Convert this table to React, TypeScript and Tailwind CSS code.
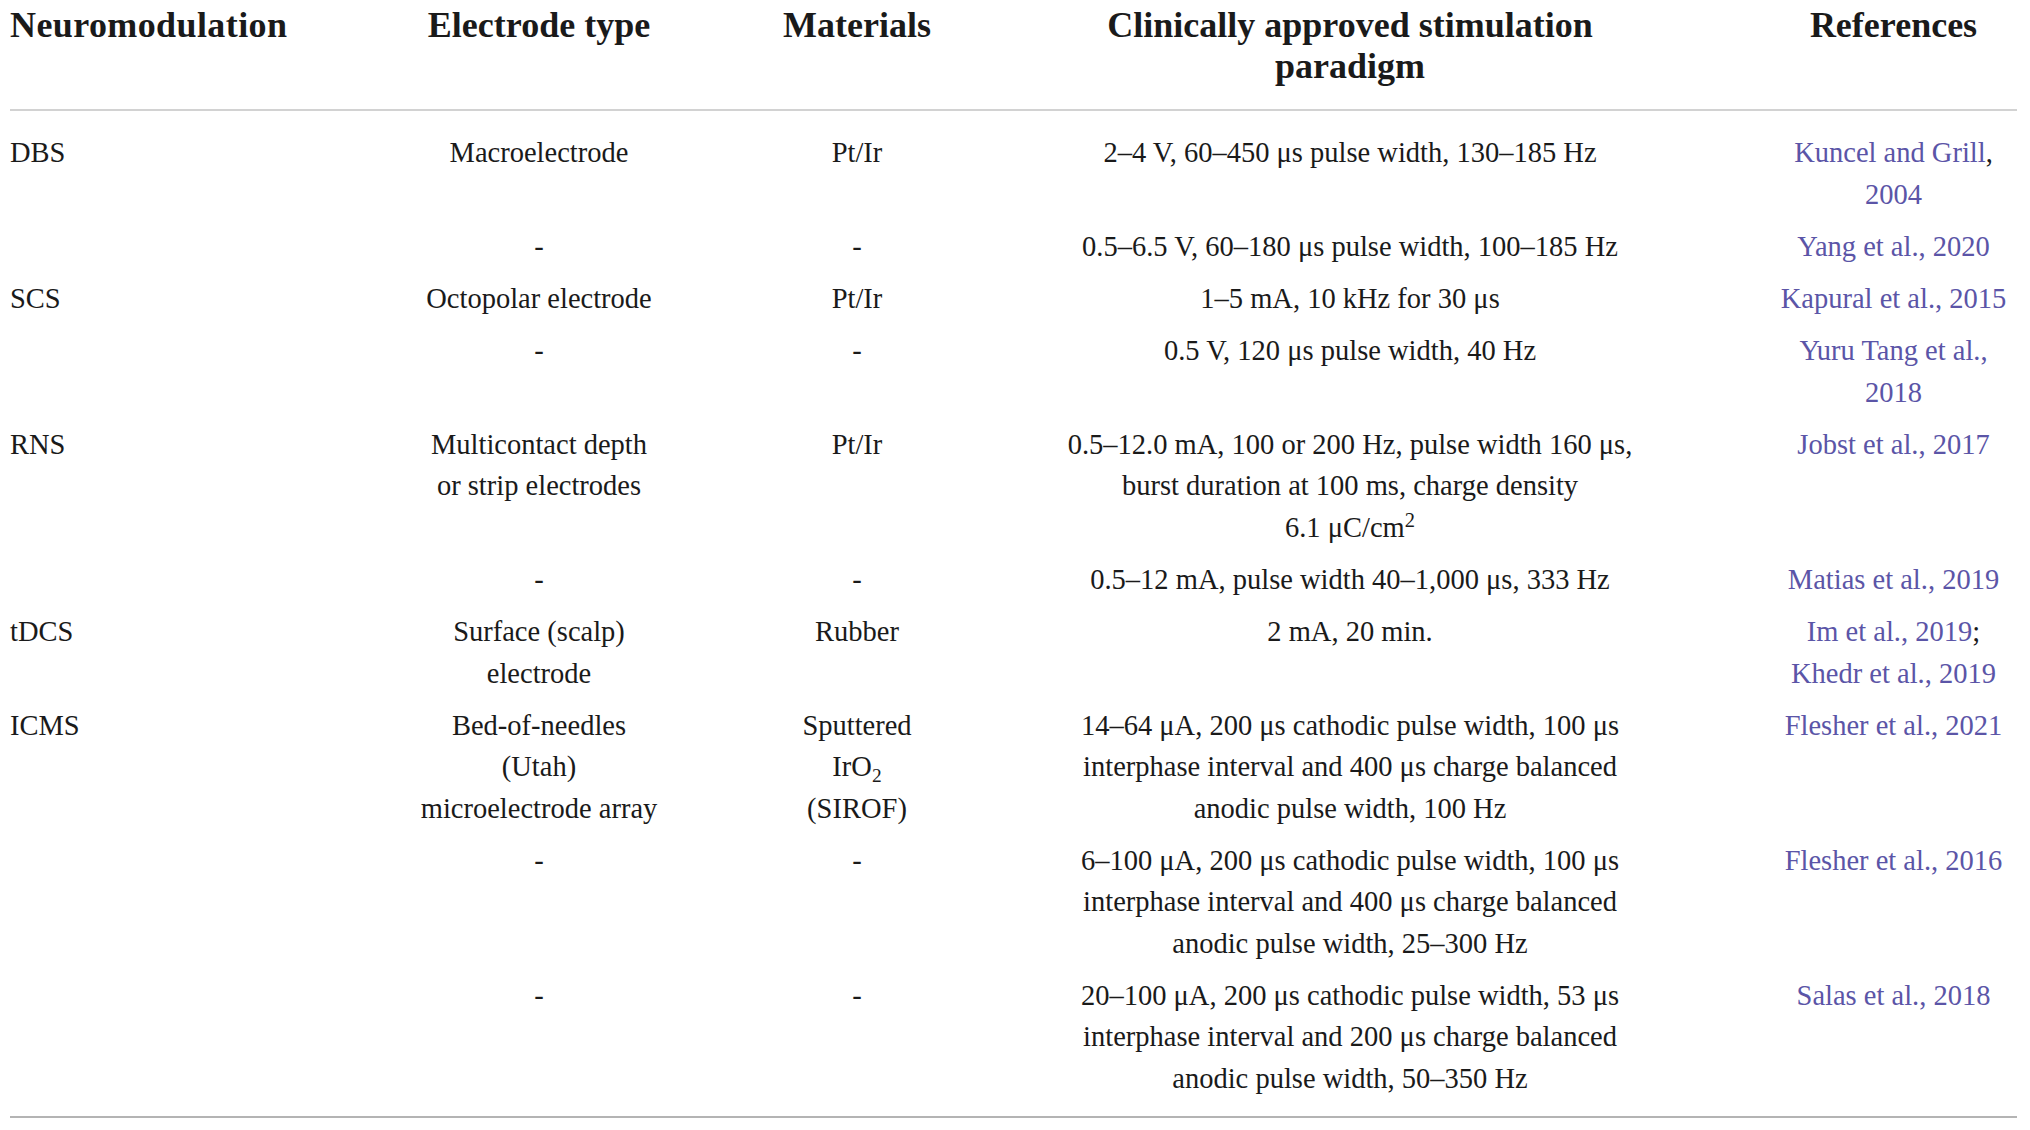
import React from 'react';

/* ------------------------------------------------------------------ */
/* Data                                                                */
/* ------------------------------------------------------------------ */

type Lines = React.ReactNode[];

interface Row {
  mod: string;
  electrode: Lines;
  material: Lines;
  paradigm: Lines;
  refs: Lines;
}

const Ref = ({ children }: { children: React.ReactNode }) => (
  <span className="text-[#5b55a7]">{children}</span>
);

const ROWS: Row[] = [
  {
    mod: 'DBS',
    electrode: ['Macroelectrode'],
    material: ['Pt/Ir'],
    paradigm: ['2–4 V, 60–450 μs pulse width, 130–185 Hz'],
    refs: [<><Ref>Kuncel and Grill</Ref>,</>, <Ref>2004</Ref>],
  },
  {
    mod: '',
    electrode: ['-'],
    material: ['-'],
    paradigm: ['0.5–6.5 V, 60–180 μs pulse width, 100–185 Hz'],
    refs: [<Ref>Yang et al., 2020</Ref>],
  },
  {
    mod: 'SCS',
    electrode: ['Octopolar electrode'],
    material: ['Pt/Ir'],
    paradigm: ['1–5 mA, 10 kHz for 30 μs'],
    refs: [<Ref>Kapural et al., 2015</Ref>],
  },
  {
    mod: '',
    electrode: ['-'],
    material: ['-'],
    paradigm: ['0.5 V, 120 μs pulse width, 40 Hz'],
    refs: [<Ref>Yuru Tang et al.,</Ref>, <Ref>2018</Ref>],
  },
  {
    mod: 'RNS',
    electrode: ['Multicontact depth', 'or strip electrodes'],
    material: ['Pt/Ir'],
    paradigm: [
      '0.5–12.0 mA, 100 or 200 Hz, pulse width 160 μs,',
      'burst duration at 100 ms, charge density',
      <>6.1 μC/cm<sup className="relative -top-[0.5em] align-baseline text-[0.72em]">2</sup></>,
    ],
    refs: [<Ref>Jobst et al., 2017</Ref>],
  },
  {
    mod: '',
    electrode: ['-'],
    material: ['-'],
    paradigm: ['0.5–12 mA, pulse width 40–1,000 μs, 333 Hz'],
    refs: [<Ref>Matias et al., 2019</Ref>],
  },
  {
    mod: 'tDCS',
    electrode: ['Surface (scalp)', 'electrode'],
    material: ['Rubber'],
    paradigm: ['2 mA, 20 min.'],
    refs: [<><Ref>Im et al., 2019</Ref>;</>, <Ref>Khedr et al., 2019</Ref>],
  },
  {
    mod: 'ICMS',
    electrode: ['Bed-of-needles', '(Utah)', 'microelectrode array'],
    material: [
      'Sputtered',
      <>IrO<sub className="relative top-[0.3em] align-baseline text-[0.68em]">2</sub></>,
      '(SIROF)',
    ],
    paradigm: [
      '14–64 μA, 200 μs cathodic pulse width, 100 μs',
      'interphase interval and 400 μs charge balanced',
      'anodic pulse width, 100 Hz',
    ],
    refs: [<Ref>Flesher et al., 2021</Ref>],
  },
  {
    mod: '',
    electrode: ['-'],
    material: ['-'],
    paradigm: [
      '6–100 μA, 200 μs cathodic pulse width, 100 μs',
      'interphase interval and 400 μs charge balanced',
      'anodic pulse width, 25–300 Hz',
    ],
    refs: [<Ref>Flesher et al., 2016</Ref>],
  },
  {
    mod: '',
    electrode: ['-'],
    material: ['-'],
    paradigm: [
      '20–100 μA, 200 μs cathodic pulse width, 53 μs',
      'interphase interval and 200 μs charge balanced',
      'anodic pulse width, 50–350 Hz',
    ],
    refs: [<Ref>Salas et al., 2018</Ref>],
  },
];

/* ------------------------------------------------------------------ */
/* Pieces                                                              */
/* ------------------------------------------------------------------ */

const GRID = 'grid grid-cols-[370px_318px_318px_668px_333px]';

const Cell = ({ lines, className = '' }: { lines: Lines; className?: string }) => (
  <div className={className}>
    {lines.map((l, i) => (
      <div key={i}>{l}</div>
    ))}
  </div>
);

/* ------------------------------------------------------------------ */
/* Main                                                                */
/* ------------------------------------------------------------------ */

export default function App() {
  return (
    <div className="min-h-screen bg-white pl-[10px] font-['Liberation_Serif',serif] text-[#1a1a1a]">
      <div className="w-[2007px]">
        {/* Header */}
        <div className={`${GRID} h-[111px] border-b-2 border-[#d2d2d2] pt-[5px] text-[36px] font-bold leading-[41px]`}>
          <div className="tracking-[0.4px]">Neuromodulation</div>
          <div className="text-center">Electrode type</div>
          <div className="text-center">Materials</div>
          <div className="text-center">
            <div>Clinically approved stimulation</div>
            <div>paradigm</div>
          </div>
          <div className="pl-[86px] text-center">References</div>
        </div>

        {/* Body */}
        <div className="border-b-2 border-[#b4b4b4] pt-[16px] pb-[12px] text-[28.5px] leading-[41.4px]">
          {ROWS.map((r, i) => (
            <div key={i} className={`${GRID} py-[5.4px]`}>
              <div>{r.mod}</div>
              <Cell lines={r.electrode} className="text-center" />
              <Cell lines={r.material} className="text-center" />
              <Cell lines={r.paradigm} className="text-center" />
              <Cell lines={r.refs} className="pl-[86px] text-center" />
            </div>
          ))}
        </div>
      </div>
    </div>
  );
}
